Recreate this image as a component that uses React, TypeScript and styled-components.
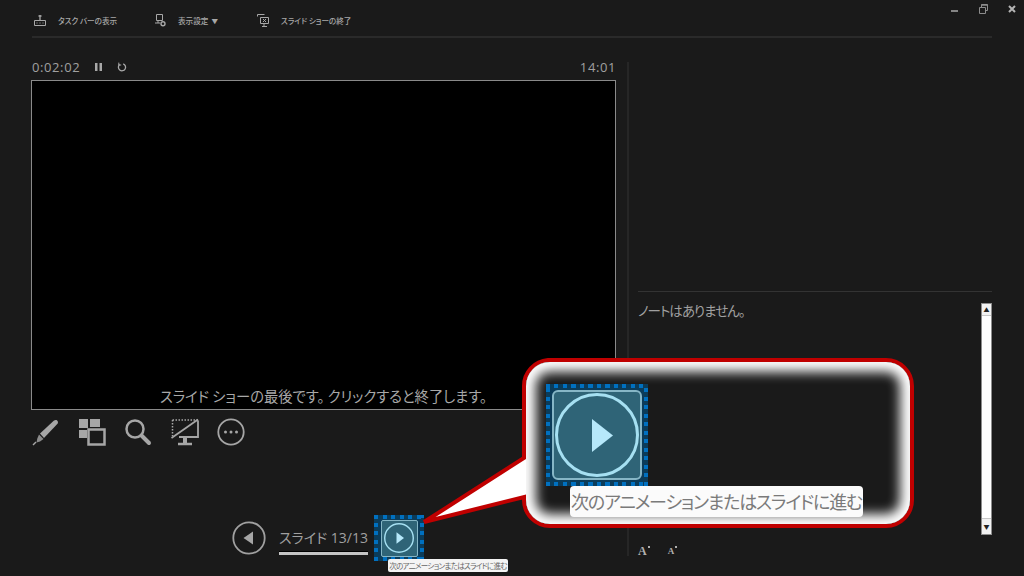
import React from "react";
import styled, { createGlobalStyle } from "styled-components";

const Global = createGlobalStyle`
  html, body { margin: 0; padding: 0; background: #1a1a1a; }
  body { font-family: "Open Sans", "Noto Sans CJK JP", sans-serif; }
`;

const jp = `"Noto Sans CJK JP", "Noto Sans", sans-serif`;

const Page = styled.div`
  position: relative;
  width: 1024px;
  height: 576px;
  overflow: hidden;
  background: #1a1a1a;
  color: #a6a6a6;
`;

const Toolbar = styled.div`
  display: flex;
  align-items: center;
  box-sizing: border-box;
  margin-left: 32px;
  width: 960px;
  height: 38px;
  padding: 4px 0 0 2px;
  border-bottom: 2px solid #2a2a2a;
`;

const ToolbarItem = styled.div<{ $w: number }>`
  display: flex;
  align-items: center;
  gap: 12px;
  width: ${(p) => p.$w}px;
  font: 500 7.6px ${jp};
  color: #a8a8a8;
  white-space: nowrap;
  font-feature-settings: "palt";
`;

const Arrow = styled.span`
  margin-left: 3px;
  font-size: 6.5px;
`;

const WindowControls = styled.div`
  position: absolute;
  top: 1px;
  left: 950px;
  display: flex;
  gap: 16px;
  color: #9a9a9a;
`;

const Main = styled.div`
  display: flex;
  height: 538px;
`;

const LeftColumn = styled.div`
  display: flex;
  flex-direction: column;
  width: 585px;
  margin-left: 31px;
`;

const TimerRow = styled.div`
  display: flex;
  align-items: center;
  height: 42px;
  padding: 16px 0 0 1px;
  box-sizing: border-box;
  font-size: 13px;
  letter-spacing: 0.6px;
  color: #a0a0a0;
`;

const TimerIcons = styled.div`
  display: flex;
  align-items: center;
  gap: 14px;
  margin-left: 14px;
  flex: 1;
`;

const Slide = styled.div`
  box-sizing: border-box;
  height: 330px;
  background: #000;
  border: 1px solid #8a8a8a;
  display: flex;
  align-items: flex-end;
  justify-content: center;
  padding-bottom: 3px;
  font: 400 14.3px ${jp};
  color: #a8a8a8;
  font-feature-settings: "palt";
`;

const ToolRow = styled.div`
  display: flex;
  gap: 18.2px;
  height: 28px;
  margin-top: 8px;
  padding-left: 1px;
  color: #a6a6a6;
`;

const NavRow = styled.div`
  display: flex;
  align-items: center;
  margin-top: 69px;
  padding-left: 201px;
  height: 46px;
`;

const BackButton = styled.div`
  width: 34px;
  height: 34px;
  margin-right: 13px;
`;

const SlideCounter = styled.div`
  display: flex;
  flex-direction: column;
  width: 89px;
  margin-right: 6px;
  padding-top: 5px;
  font: 400 14px "Open Sans", ${jp};
  color: #a0a0a0;
  white-space: nowrap;
  font-feature-settings: "palt";
`;

const Progress = styled.div`
  height: 3px;
  margin-top: 5px;
  background: #c4c4c4;
  box-shadow: 0 -1px 0 #000;
`;

const dots = (step: number) => `
  repeating-linear-gradient(90deg, #0070c0 0 4px, transparent 4px ${step}px) top / 100% 4px no-repeat,
  repeating-linear-gradient(90deg, #0070c0 0 4px, transparent 4px ${step}px) bottom / 100% 4px no-repeat,
  repeating-linear-gradient(0deg, #0070c0 0 4px, transparent 4px ${step}px) left / 4px 100% no-repeat,
  repeating-linear-gradient(0deg, #0070c0 0 4px, transparent 4px ${step}px) right / 4px 100% no-repeat,
  #0b3c5a
`;

const FocusFrame = styled.div<{ $big?: boolean }>`
  position: relative;
  box-sizing: border-box;
  display: flex;
  align-items: center;
  justify-content: center;
  width: ${(p) => (p.$big ? 102 : 50)}px;
  height: ${(p) => (p.$big ? 102 : 46)}px;
  background: ${(p) => dots(p.$big ? 8.5 : 8.6)};
`;

const HoverButton = styled.div<{ $big?: boolean }>`
  box-sizing: border-box;
  display: flex;
  align-items: center;
  justify-content: center;
  width: ${(p) => (p.$big ? 90 : 37)}px;
  height: ${(p) => (p.$big ? 90 : 37)}px;
  background: #2f6477;
  border: ${(p) => (p.$big ? 2 : 1)}px solid #86b6c6;
  border-radius: ${(p) => (p.$big ? 6 : 2)}px;
`;

const SmallTip = styled.div`
  position: absolute;
  left: 14px;
  top: 44px;
  box-sizing: border-box;
  width: 120px;
  height: 13px;
  background: #f4f4f4;
  border-radius: 2px;
  font: 400 7.5px/13px ${jp};
  text-align: center;
  color: #666;
  white-space: nowrap;
  font-feature-settings: "palt";
  letter-spacing: -0.7px;
  z-index: 2;
`;

const Divider = styled.div`
  width: 2px;
  margin: 24px 0 20px 11px;
  background: #262626;
`;

const RightColumn = styled.div`
  display: flex;
  flex-direction: column;
  width: 354px;
  margin-left: 9px;
`;

const NotesLine = styled.div`
  height: 1px;
  margin-top: 253px;
  background: #333;
`;

const NotesArea = styled.div`
  display: flex;
  justify-content: space-between;
  height: 232px;
  margin-top: 11px;
`;

const NotesText = styled.div`
  margin-top: -2px;
  font: 400 13.5px/18px ${jp};
  color: #a0a0a0;
  font-feature-settings: "palt";
  letter-spacing: -1px;
`;

const ScrollBar = styled.div`
  box-sizing: border-box;
  display: flex;
  flex-direction: column;
  justify-content: space-between;
  width: 11px;
  background: #fff;
  border: 1px solid #8d8d8d;
`;

const ScrollArrow = styled.div<{ $down?: boolean }>`
  display: flex;
  align-items: center;
  justify-content: center;
  height: ${(p) => (p.$down ? 15 : 11)}px;
  font-size: 6px;
  line-height: 1;
  color: #222;
  background: #f2f2f2;
  border-${(p) => (p.$down ? "top" : "bottom")}: 1px solid #c8c8c8;
`;

const FontSizes = styled.div`
  display: flex;
  gap: 17px;
  margin-top: 9px;
  font: 700 11px "Liberation Serif", serif;
  color: #b0b0b0;
`;

const FontButton = styled.span<{ $small?: boolean }>`
  position: relative;
  font-size: ${(p) => (p.$small ? 9 : 12)}px;
  line-height: 14px;
  padding-right: 4px;
  &::after {
    content: "";
    position: absolute;
    right: 1px;
    top: 2px;
    width: 2px;
    height: 2px;
    background: #b0b0b0;
  }
`;

const CalloutShape = styled.svg`
  position: absolute;
  left: 410px;
  top: 350px;
  z-index: 3;
`;

const CalloutBody = styled.div`
  position: absolute;
  left: 526px;
  top: 362px;
  box-sizing: border-box;
  width: 384px;
  height: 162px;
  padding: 22px 0 0 20px;
  border-radius: 24px;
  background: #1a1a1a;
  box-shadow: inset 0 0 12px 10px #fff;
  z-index: 4;
`;

const BigTip = styled.div`
  position: absolute;
  left: 44px;
  top: 124px;
  box-sizing: border-box;
  width: 293px;
  height: 31px;
  background: #fbfbfb;
  border-radius: 4px;
  font: 400 18px/31px ${jp};
  text-align: center;
  color: #7a7a7a;
  white-space: nowrap;
  font-feature-settings: "palt";
  letter-spacing: -1.2px;
`;

const PlayIcon = ({ size }: { size: number }) => (
  <svg width={size} height={size} viewBox="0 0 84 84">
    <circle cx="42" cy="42" r="40" fill="none" stroke="#a6e0f2" strokeWidth={4} />
    <path d="M35 26 L56 42 L35 58 Z" fill="#b6e8fa" />
  </svg>
);

const tipText = "次のアニメーションまたはスライドに進む";

export default function App() {
  return (
    <Page>
      <Global />
      <Toolbar>
        <ToolbarItem $w={121}>
          <svg width="12" height="11" viewBox="0 0 12 11" fill="none" stroke="#a8a8a8">
            <path d="M.5 5.5h11v5H.5z" />
            <path d="M6 0v5M4.5 1h3" strokeWidth="1.3" />
            <path d="M2.5 8h1M5.5 8h1M8.5 8h1" />
          </svg>
          タスク バーの表示
        </ToolbarItem>
        <ToolbarItem $w={102}>
          <svg width="11" height="13" viewBox="0 0 11 13" fill="none" stroke="#a8a8a8">
            <path d="M1.5.5h6v6h-6zM0 9h5M3 7v2" />
            <circle cx="8" cy="9.7" r="2" strokeWidth="1.4" />
          </svg>
          <span>
            表示設定<Arrow>▼</Arrow>
          </span>
        </ToolbarItem>
        <ToolbarItem $w={100}>
          <svg width="12" height="13" viewBox="0 0 12 13" fill="none" stroke="#a8a8a8">
            <path d="M.5.5h7M.5.5v2M3.5 3.5h8v6h-8zM5 12.5h5M7 10v2" />
            <path d="M6 5l3 3M9 5L6 8" />
          </svg>
          スライド ショーの終了
        </ToolbarItem>
      </Toolbar>
      <WindowControls>
        <svg width="12" height="14" viewBox="0 0 12 14">
          <path d="M1 10h7" stroke="#a0a0a0" strokeWidth="1.6" />
        </svg>
        <svg width="12" height="14" viewBox="0 0 12 14" fill="none" stroke="#8c8c8c">
          <path d="M1.5 6.5h6v6h-6zM3.5 6V3.5h6v6H8" />
          <path d="M3.5 4h6" strokeWidth="1.5" />
        </svg>
        <svg width="12" height="14" viewBox="0 0 12 14">
          <path d="M3 5l6 6M9 5l-6 6" stroke="#b4b4b4" strokeWidth="2" />
        </svg>
      </WindowControls>
      <Main>
        <LeftColumn>
          <TimerRow>
            0:02:02
            <TimerIcons>
              <svg width="9" height="10" viewBox="0 0 9 10" fill="#a8a8a8">
                <path d="M1 1h2.5v8H1zM5.5 1H8v8H5.5z" />
              </svg>
              <svg width="10" height="10" viewBox="0 0 10 10" fill="none" stroke="#a8a8a8" strokeWidth="1.3">
                <path d="M6.2 1.8A3.6 3.6 0 1 1 2.6 2.5" />
                <path d="M1.8 .6v2.4h2.4" strokeWidth="1" />
              </svg>
            </TimerIcons>
            14:01
          </TimerRow>
          <Slide>スライド ショーの最後です。 クリックすると終了します。</Slide>
          <ToolRow>
            <svg width="28" height="28" viewBox="0 0 28 28">
              <path d="M8 15.5L22 2.5c2.5-1.8 5 .8 3.5 3.3L12 20z" fill="#a6a6a6" />
              <path d="M7 16.5l4.5 4.500-3.500 2.500-3.500 1 .8-4z" fill="#8c8c8c" />
              <path d="M1 27l3-3" stroke="#a6a6a6" strokeWidth="1.5" />
            </svg>
            <svg width="28" height="28" viewBox="0 0 28 28">
              <path d="M1 1h9v9H1zM12 1h10v8H12zM1 12h8v8H1z" fill="#a6a6a6" />
              <rect x="10.5" y="11.5" width="16" height="15" fill="#1a1a1a" stroke="#a6a6a6" strokeWidth="2.5" />
            </svg>
            <svg width="28" height="28" viewBox="0 0 28 28" fill="none" stroke="#a6a6a6">
              <circle cx="11" cy="11" r="8.5" strokeWidth="2.5" />
              <path d="M17.5 17.5L25 25" strokeWidth="4" strokeLinecap="round" />
            </svg>
            <svg width="28" height="28" viewBox="0 0 28 28" fill="none" stroke="#a6a6a6">
              <path d="M1.5 2v16" strokeDasharray="1.5 1.5" strokeWidth="1.5" />
              <path d="M1.5 2H27" strokeDasharray="1.5 1.5" strokeWidth="1.5" />
              <path d="M27 2.5v16.5H8" strokeWidth="1.8" />
              <path d="M.5 20L27 1.5" strokeWidth="1.8" />
              <path d="M14 19v6" strokeWidth="4" />
              <path d="M7 26h14" strokeWidth="2.5" />
            </svg>
            <svg width="28" height="28" viewBox="0 0 28 28" fill="none" stroke="#a6a6a6">
              <circle cx="14" cy="14" r="12.7" strokeWidth="1.8" />
              <circle cx="8.5" cy="14" r="1.5" fill="#a6a6a6" stroke="none" />
              <circle cx="14" cy="14" r="1.5" fill="#a6a6a6" stroke="none" />
              <circle cx="19.5" cy="14" r="1.5" fill="#a6a6a6" stroke="none" />
            </svg>
          </ToolRow>
          <NavRow>
            <BackButton>
              <svg width="34" height="34" viewBox="0 0 34 34" fill="none">
                <circle cx="17" cy="17" r="15.7" stroke="#a0a0a0" strokeWidth="1.8" />
                <path d="M21 10.5v13L11.5 17z" fill="#a6a6a6" />
              </svg>
            </BackButton>
            <SlideCounter>
              スライド 13/13
              <Progress />
            </SlideCounter>
            <FocusFrame>
              <HoverButton>
                <PlayIcon size={30} />
              </HoverButton>
              <SmallTip>{tipText}</SmallTip>
            </FocusFrame>
          </NavRow>
        </LeftColumn>
        <Divider />
        <RightColumn>
          <NotesLine />
          <NotesArea>
            <NotesText>ノートはありません。</NotesText>
            <ScrollBar>
              <ScrollArrow>▲</ScrollArrow>
              <ScrollArrow $down>▼</ScrollArrow>
            </ScrollBar>
          </NotesArea>
          <FontSizes>
            <FontButton>A</FontButton>
            <FontButton $small>A</FontButton>
          </FontSizes>
        </RightColumn>
      </Main>
      <CalloutShape width="510" height="182" viewBox="410 350 510 182">
        <path
          d="M548 360H886a26 26 0 0 1 26 26V500a26 26 0 0 1 -26 26H550a26 26 0 0 1 -26 -26V497L424 522L524 458V386a26 26 0 0 1 24 -26Z"
          fill="#fff"
          stroke="#c00000"
          strokeWidth="4"
          strokeLinejoin="miter"
        />
      </CalloutShape>
      <CalloutBody>
        <FocusFrame $big>
          <HoverButton $big>
            <svg width="86" height="86" viewBox="0 0 86 86">
              <circle cx="43" cy="43" r="40.5" fill="none" stroke="#a6e0f2" strokeWidth="3" />
              <path d="M38 27 L59 43.5 L38 60 Z" fill="#b6e8fa" />
            </svg>
          </HoverButton>
        </FocusFrame>
        <BigTip>{tipText}</BigTip>
      </CalloutBody>
    </Page>
  );
}
